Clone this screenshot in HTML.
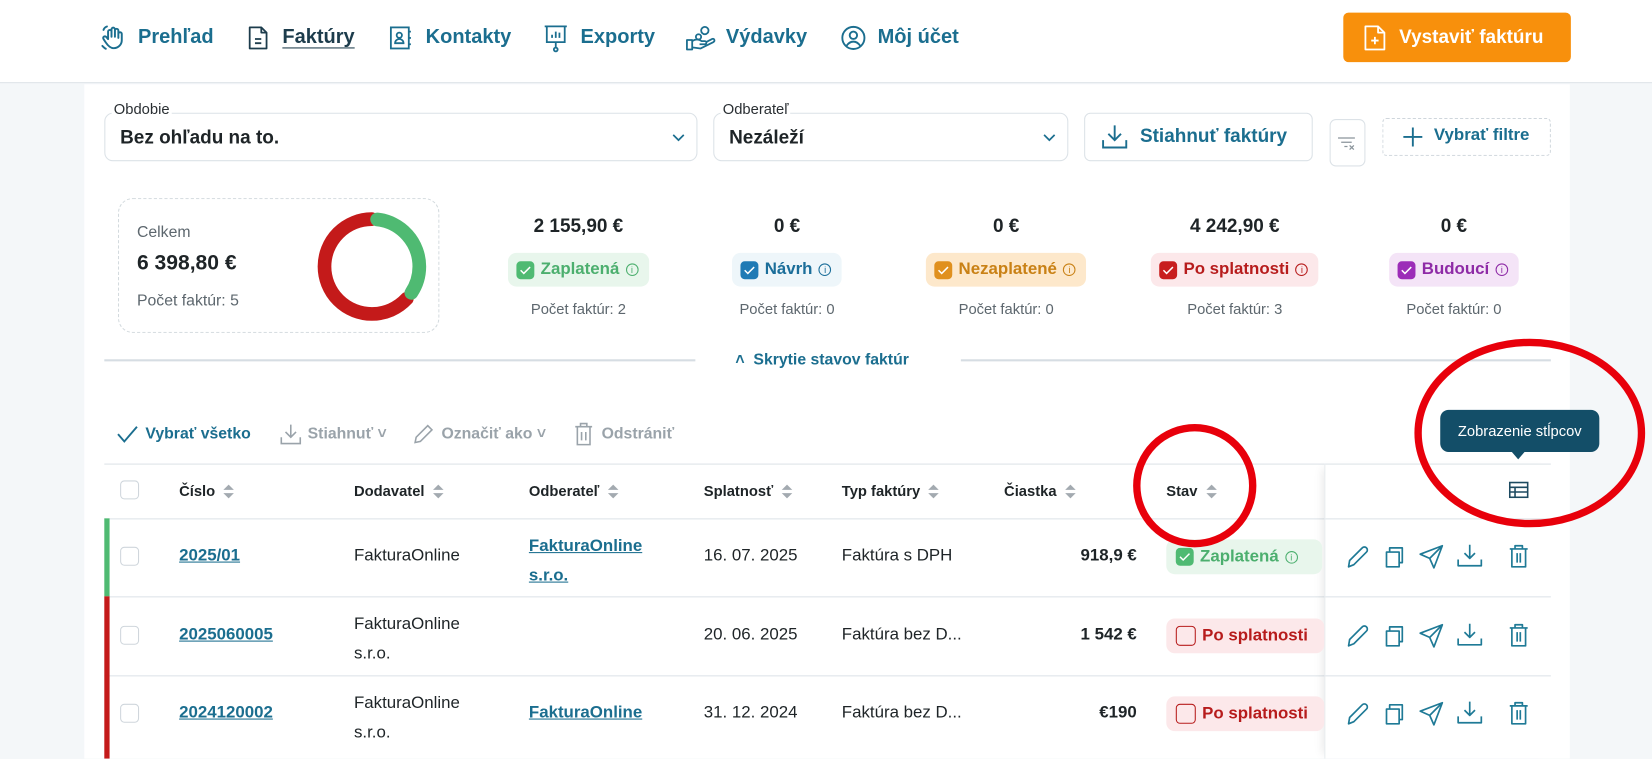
<!DOCTYPE html>
<html><head><meta charset="utf-8">
<style>
*{margin:0;padding:0;box-sizing:border-box}
html,body{width:1652px;height:748px;overflow:hidden;background:#f4f7f9;font-family:"Liberation Sans",sans-serif}
#st{position:absolute;left:0;top:0;width:1568px;height:710px;transform:scale(1.05357);transform-origin:0 0;background:#f4f7f9}
.a{position:absolute;white-space:nowrap}
.nav{color:#1b6e8f;font-size:19px;font-weight:bold;top:25px}
.ic{position:absolute}
.sel{position:absolute;border:1px solid #dce2e7;border-radius:8px;background:#fff;height:46px;top:107px}
.lbl{position:absolute;font-size:14px;color:#2a2f33;background:#fff;padding:0 2px;top:95px}
.selt{position:absolute;left:14px;top:12px;font-size:18px;font-weight:bold;color:#1e2427}
.amt{font-size:18px;font-weight:bold;color:#1e2427;top:204px;transform:translateX(-50%)}
.cnt{font-size:14px;color:#5d676e;top:285px;transform:translateX(-50%)}
.badge{position:absolute;top:240px;height:32px;border-radius:8px;font-size:16px;font-weight:bold;padding:0 10px 0 8px;display:flex;align-items:center;gap:6px;transform:translateX(-50%);white-space:nowrap}
.cb{width:17px;height:17px;border-radius:4px;display:inline-flex;align-items:center;justify-content:center}
.inf{width:12px;height:12px;border:1px solid currentColor;border-radius:50%;font-size:9px;display:inline-flex;align-items:center;justify-content:center;font-weight:normal}
.th{font-size:14px;font-weight:bold;color:#1e2427;top:458px}
.srt{display:inline-block;vertical-align:middle;margin-left:8px;width:10px;height:14px;position:relative}
.srt:before{content:"";position:absolute;left:0;top:0;border:5px solid transparent;border-bottom:5px solid #a3aab0;border-top:none}
.srt:after{content:"";position:absolute;left:0;top:8px;border:5px solid transparent;border-top:5px solid #a3aab0;border-bottom:none}
.td{font-size:16px;color:#1e2427}
.lnk{color:#1b6e8f;font-weight:bold;text-decoration:underline;font-size:16px}
.chk{position:absolute;left:114px;width:18px;height:18px;border:1.5px solid #cfd6dc;border-radius:4px;background:#fff}
.hl{position:absolute;left:99px;width:1373px;height:1px;background:#dde3e8}
.tb{font-size:15px;font-weight:bold;color:#9aa3aa;top:403px}
</style></head><body><div id="st">
<!-- nav -->
<div class="a" style="left:0;top:0;width:1568px;height:79px;background:#fff;border-bottom:1px solid #dbe2e7"></div>
<svg class="ic" style="left:95px;top:23px" width="26" height="26" viewBox="0 0 24 24" fill="none" stroke="#1b6e8f" stroke-width="1.7" stroke-linecap="round" stroke-linejoin="round"><path d="M7 13V6.5a1.5 1.5 0 013 0V11M10 10V4.5a1.5 1.5 0 013 0V11M13 10V5.5a1.5 1.5 0 013 0V12M16 11V8.5a1.5 1.5 0 013 0V14a7 7 0 01-7 7c-3 0-5-2-7-5l-2-3a1.5 1.5 0 012.4-1.8L7 13"/><path d="M3 5c.5-1.5 1.5-2.5 3-3M2 19c1 1 2 2 3 2.5"/></svg>
<div class="a nav" style="left:131px">Prehľad</div>
<svg class="ic" style="left:234px;top:24px" width="22" height="24" viewBox="0 0 22 24" fill="none" stroke="#1d3c4c" stroke-width="1.7" stroke-linejoin="round"><path d="M3 2h11l5 5v15H3z"/><path d="M14 2v5h5M8 13h6M8 17h6"/></svg>
<div class="a nav" style="left:268px;color:#1d3c4c;text-decoration:underline;text-underline-offset:4px">Faktúry</div>
<svg class="ic" style="left:369px;top:24px" width="23" height="24" viewBox="0 0 23 24" fill="none" stroke="#1b6e8f" stroke-width="1.7"><rect x="2" y="2" width="17" height="20"/><path d="M19 6h2M19 12h2M19 18h2"/><circle cx="10" cy="9.5" r="2.5"/><path d="M6 17c0-2.5 2-4 4-4s4 1.5 4 4z"/></svg>
<div class="a nav" style="left:404px">Kontakty</div>
<svg class="ic" style="left:515px;top:22px" width="25" height="28" viewBox="0 0 25 28" fill="none" stroke="#1b6e8f" stroke-width="1.7"><path d="M2 3h21M4 3v15h17V3M12.5 18v5"/><circle cx="12.5" cy="25" r="1.8"/><path d="M9 14v-3M12.5 14V8M16 14v-5"/></svg>
<div class="a nav" style="left:551px">Exporty</div>
<svg class="ic" style="left:650px;top:23px" width="30" height="26" viewBox="0 0 30 26" fill="none" stroke="#1b6e8f" stroke-width="1.7" stroke-linejoin="round"><circle cx="19" cy="6" r="3.5"/><circle cx="13" cy="12" r="2.5"/><path d="M2 15h5v9H2zM7 16c3-2 6-2 9 0h3c2 0 2 3 0 3h-5M7 22l8 1 12-6c2-1 1-4-1-3l-6 3"/></svg>
<div class="a nav" style="left:689px">Výdavky</div>
<svg class="ic" style="left:798px;top:24px" width="24" height="24" viewBox="0 0 24 24" fill="none" stroke="#1b6e8f" stroke-width="1.8"><circle cx="12" cy="12" r="10.5"/><circle cx="12" cy="9.5" r="3.5"/><path d="M5.5 19.5c2-3 4-4 6.5-4s4.5 1 6.5 4"/></svg>
<div class="a nav" style="left:833px">Môj účet</div>
<div class="a" style="left:1275px;top:12px;width:216px;height:47px;background:#f8900c;border-radius:5px"></div>
<svg class="ic" style="left:1294px;top:23px" width="22" height="26" viewBox="0 0 22 26" fill="none" stroke="#fff" stroke-width="1.7" stroke-linejoin="round"><path d="M2 2h12l6 6v16H2z"/><path d="M14 2v6h6M11 12v7M7.5 15.5h7"/></svg>
<div class="a" style="left:1328px;top:25px;color:#fff;font-size:18px;font-weight:bold">Vystaviť faktúru</div>
<!-- panel -->
<div class="a" style="left:80px;top:80px;width:1410px;height:640px;background:#fff"></div>
<div class="sel" style="left:99px;width:563px"><div class="selt">Bez ohľadu na to.</div><svg class="ic" style="left:537px;top:18px" width="14" height="10" viewBox="0 0 14 10" fill="none" stroke="#1b6e8f" stroke-width="1.6"><path d="M2 2l5 5 5-5"/></svg></div>
<div class="lbl" style="left:106px">Obdobie</div>
<div class="sel" style="left:677px;width:337px"><div class="selt">Nezáleží</div><svg class="ic" style="left:311px;top:18px" width="14" height="10" viewBox="0 0 14 10" fill="none" stroke="#1b6e8f" stroke-width="1.6"><path d="M2 2l5 5 5-5"/></svg></div>
<div class="lbl" style="left:684px">Odberateľ</div>
<div class="a" style="left:1029px;top:107px;width:217px;height:46px;border:1px solid #dce2e7;border-radius:6px"></div>
<svg class="ic" style="left:1045px;top:117px" width="26" height="26" viewBox="0 0 26 26" fill="none" stroke="#1b6e8f" stroke-width="1.8"><path d="M13 2v14M7 10l6 6 6-6M2 16v7h22v-7"/></svg>
<div class="a" style="left:1082px;top:119px;font-size:18px;font-weight:bold;color:#1b6e8f">Stiahnuť faktúry</div>
<div class="a" style="left:1262px;top:113px;width:34px;height:45px;border:1px solid #dce2e7;border-radius:6px"></div>
<svg class="ic" style="left:1269px;top:129px" width="20" height="16" viewBox="0 0 20 16" fill="none" stroke="#8a949b" stroke-width="1.2"><path d="M1 2h16M4 6h10M7 10h3M12 9l4 4M16 9l-4 4"/></svg>
<div class="a" style="left:1312px;top:112px;width:160px;height:36px;border:1px dashed #cfd6dc;border-radius:4px"></div>
<svg class="ic" style="left:1330px;top:119px" width="22" height="22" viewBox="0 0 22 22" fill="none" stroke="#1b6e8f" stroke-width="1.8"><path d="M11 2v18M2 11h18"/></svg>
<div class="a" style="left:1361px;top:120px;font-size:16px;font-weight:bold;color:#1b6e8f">Vybrať filtre</div>
<!-- summary -->
<div class="a" style="left:112px;top:188px;width:305px;height:128px;border:1.5px dashed #d3dade;border-radius:14px;background:#fff"></div>
<div class="a" style="left:130px;top:212px;font-size:15px;color:#5d676e">Celkem</div>
<div class="a" style="left:130px;top:239px;font-size:20px;font-weight:bold;color:#1e2427">6 398,80 €</div>
<div class="a" style="left:130px;top:277px;font-size:15px;color:#5d676e">Počet faktúr: 5</div>
<svg class="ic" style="left:296px;top:196px" width="114" height="114" viewBox="0 0 114 114" fill="none" stroke-width="13" stroke-linecap="round"><circle cx="57" cy="57" r="45" stroke="#c41a1a" stroke-dasharray="178 105" stroke-dashoffset="-104" transform="rotate(-90 57 57)"/><circle cx="57" cy="57" r="45" stroke="#4fba72" stroke-dasharray="92 191" stroke-dashoffset="-5" transform="rotate(-90 57 57)"/></svg>
<!-- stats -->
<div class="a amt" style="left:549px">2 155,90 €</div>
<div class="badge" style="left:549px;background:#e8f6ec;color:#4caf6e"><span class="cb" style="background:#4fba72"><svg width="11" height="9" viewBox="0 0 11 9" fill="none" stroke="#fff" stroke-width="1.4"><path d="M1 4.5l3 3 6-6"/></svg></span>Zaplatená <span class="inf">i</span></div>
<div class="a cnt" style="left:549px">Počet faktúr: 2</div>
<div class="a amt" style="left:747px">0 €</div>
<div class="badge" style="left:747px;background:#eef6fa;color:#1b6e9a"><span class="cb" style="background:#1f7ab5"><svg width="11" height="9" viewBox="0 0 11 9" fill="none" stroke="#fff" stroke-width="1.4"><path d="M1 4.5l3 3 6-6"/></svg></span>Návrh <span class="inf">i</span></div>
<div class="a cnt" style="left:747px">Počet faktúr: 0</div>
<div class="a amt" style="left:955px">0 €</div>
<div class="badge" style="left:955px;background:#fde8cb;color:#c98115"><span class="cb" style="background:#e0901e"><svg width="11" height="9" viewBox="0 0 11 9" fill="none" stroke="#fff" stroke-width="1.4"><path d="M1 4.5l3 3 6-6"/></svg></span>Nezaplatené <span class="inf">i</span></div>
<div class="a cnt" style="left:955px">Počet faktúr: 0</div>
<div class="a amt" style="left:1172px">4 242,90 €</div>
<div class="badge" style="left:1172px;background:#fce8ea;color:#b71c1c"><span class="cb" style="background:#c81e1e"><svg width="11" height="9" viewBox="0 0 11 9" fill="none" stroke="#fff" stroke-width="1.4"><path d="M1 4.5l3 3 6-6"/></svg></span>Po splatnosti <span class="inf">i</span></div>
<div class="a cnt" style="left:1172px">Počet faktúr: 3</div>
<div class="a amt" style="left:1380px">0 €</div>
<div class="badge" style="left:1380px;background:#f4e4f7;color:#8e2aa6"><span class="cb" style="background:#9c2cb8"><svg width="11" height="9" viewBox="0 0 11 9" fill="none" stroke="#fff" stroke-width="1.4"><path d="M1 4.5l3 3 6-6"/></svg></span>Budoucí <span class="inf">i</span></div>
<div class="a cnt" style="left:1380px">Počet faktúr: 0</div>
<!-- divider -->
<div class="a" style="left:99px;top:341px;width:561px;height:2px;background:#d6dde3"></div>
<div class="a" style="left:912px;top:341px;width:560px;height:2px;background:#d6dde3"></div>
<div class="a" style="left:698px;top:333px;font-size:15px;font-weight:bold;color:#1b6e8f">˄&nbsp; Skrytie stavov faktúr</div>
<!-- toolbar -->
<svg class="ic" style="left:110px;top:403px" width="22" height="18" viewBox="0 0 22 18" fill="none" stroke="#1b6e8f" stroke-width="1.8"><path d="M2 9l6 7L20 2"/></svg>
<div class="a tb" style="left:138px;color:#1b6e8f">Vybrať všetko</div>
<svg class="ic" style="left:265px;top:401px" width="22" height="22" viewBox="0 0 22 22" fill="none" stroke="#9aa3aa" stroke-width="1.5"><path d="M11 2v12M6 9l5 5 5-5M2 14v6h18v-6"/></svg>
<div class="a tb" style="left:292px">Stiahnuť ˅</div>
<svg class="ic" style="left:391px;top:401px" width="22" height="22" viewBox="0 0 22 22" fill="none" stroke="#9aa3aa" stroke-width="1.5"><path d="M3 19l1-5L15 3l4 4L8 18z"/></svg>
<div class="a tb" style="left:419px">Označiť ako ˅</div>
<svg class="ic" style="left:545px;top:401px" width="18" height="22" viewBox="0 0 18 22" fill="none" stroke="#9aa3aa" stroke-width="1.5"><path d="M1 4h16M6 4V1h6v3M3 4v17h12V4M7 9v8M11 9v8"/></svg>
<div class="a tb" style="left:571px">Odstrániť</div>
<!-- table -->
<div class="hl" style="top:440px"></div>
<div class="hl" style="top:492px"></div>
<div class="hl" style="top:566px"></div>
<div class="hl" style="top:641px"></div>
<div class="a" style="left:1257px;top:440px;width:215px;height:280px;box-shadow:-6px 0 8px -4px rgba(0,0,0,.08);border-left:1px solid #e8ecef"></div>
<div class="chk" style="top:456px"></div>
<div class="a th" style="left:170px">Číslo<span class="srt"></span></div>
<div class="a th" style="left:336px">Dodavatel<span class="srt"></span></div>
<div class="a th" style="left:502px">Odberateľ<span class="srt"></span></div>
<div class="a th" style="left:668px">Splatnosť<span class="srt"></span></div>
<div class="a th" style="left:799px">Typ faktúry<span class="srt"></span></div>
<div class="a th" style="left:953px">Čiastka<span class="srt"></span></div>
<div class="a th" style="left:1107px">Stav<span class="srt"></span></div>
<svg class="ic" style="left:1432px;top:457px" width="19" height="16" viewBox="0 0 19 16" fill="none" stroke="#1d4a60" stroke-width="1.5"><rect x="1" y="1" width="17" height="14"/><path d="M1 5.5h17M1 10h17M6 5.5V15"/></svg>
<!-- rows -->
<div class="a" style="left:99px;top:492px;width:5px;height:74px;background:#4fba72"></div>
<div class="a" style="left:99px;top:566px;width:5px;height:154px;background:#c41a1a"></div>
<div class="chk" style="top:519px"></div>
<div class="chk" style="top:594px"></div>
<div class="chk" style="top:668px"></div>
<div class="a lnk" style="left:170px;top:519px">2025/01</div>
<div class="a td" style="left:336px;top:519px">FakturaOnline</div>
<div class="a lnk" style="left:502px;top:505px;line-height:28px;white-space:normal">FakturaOnline<br>s.r.o.</div>
<div class="a td" style="left:668px;top:519px">16. 07. 2025</div>
<div class="a td" style="left:799px;top:519px">Faktúra s DPH</div>
<div class="a td" style="left:1079px;top:519px;font-weight:bold;transform:translateX(-100%)">918,9 €</div>
<div class="a lnk" style="left:170px;top:594px">2025060005</div>
<div class="a td" style="left:336px;top:579px;line-height:28px">FakturaOnline<br>s.r.o.</div>
<div class="a td" style="left:668px;top:594px">20. 06. 2025</div>
<div class="a td" style="left:799px;top:594px">Faktúra bez D...</div>
<div class="a td" style="left:1079px;top:594px;font-weight:bold;transform:translateX(-100%)">1 542 €</div>
<div class="a lnk" style="left:170px;top:668px">2024120002</div>
<div class="a td" style="left:336px;top:654px;line-height:28px">FakturaOnline<br>s.r.o.</div>
<div class="a lnk" style="left:502px;top:668px">FakturaOnline</div>
<div class="a td" style="left:668px;top:668px">31. 12. 2024</div>
<div class="a td" style="left:799px;top:668px">Faktúra bez D...</div>
<div class="a td" style="left:1079px;top:668px;font-weight:bold;transform:translateX(-100%)">€190</div>
<!-- stav badges -->
<div class="a" style="left:1107px;top:512px;width:148px;height:33px;background:#e8f6ec;border-radius:8px;display:flex;align-items:center;gap:6px;padding-left:9px;color:#4caf6e;font-weight:bold;font-size:16px"><span class="cb" style="background:#4fba72"><svg width="11" height="9" viewBox="0 0 11 9" fill="none" stroke="#fff" stroke-width="1.4"><path d="M1 4.5l3 3 6-6"/></svg></span>Zaplatená <span class="inf">i</span></div>
<div class="a" style="left:1107px;top:587px;width:150px;height:33px;background:#fce8ea;border-radius:8px;display:flex;align-items:center;gap:6px;padding-left:9px;color:#b71c1c;font-weight:bold;font-size:16px"><span class="cb" style="border:1.5px solid #b71c1c;width:19px;height:19px"></span>Po splatnosti</div>
<div class="a" style="left:1107px;top:661px;width:150px;height:33px;background:#fce8ea;border-radius:8px;display:flex;align-items:center;gap:6px;padding-left:9px;color:#b71c1c;font-weight:bold;font-size:16px"><span class="cb" style="border:1.5px solid #b71c1c;width:19px;height:19px"></span>Po splatnosti</div>
<!-- action icons -->
<svg class="ic" style="left:1277px;top:514px" width="180" height="180" viewBox="0 0 180 180" fill="none" stroke="#1f7a96" stroke-width="1.6" stroke-linejoin="round">
<g id="r"><path d="M3 24l1-6L16 6a2.5 2.5 0 014 4L8 22z"/><path d="M39 10h12v14H39z"/><path d="M42 10V6h12v14h-3"/><path d="M71 12l21-8-8 21-4-9z M80 16l12-12"/><path d="M118 3v13M113 11l5 5 5-5M107 17v6h22v-6"/><path d="M156 7h17M161 7V4h7v3M158 7v17h13V7M163 11v9M166 11v9"/></g>
<use href="#r" y="75"/><use href="#r" y="149"/></svg>
<!-- tooltip -->
<div class="a" style="left:1367px;top:389px;width:151px;height:40px;background:#134e68;border-radius:8px;color:#fff;font-size:14px;display:flex;align-items:center;justify-content:center">Zobrazenie stĺpcov</div>
<div class="a" style="left:1435px;top:429px;border:6px solid transparent;border-top:7px solid #134e68"></div>
<!-- red circles -->
<svg class="ic" style="left:0;top:0" width="1568" height="710" fill="none" stroke="#e8000b" stroke-width="7"><ellipse cx="1134" cy="461" rx="55" ry="55"/><ellipse cx="1452" cy="411" rx="106" ry="86"/></svg>
</div></body></html>
